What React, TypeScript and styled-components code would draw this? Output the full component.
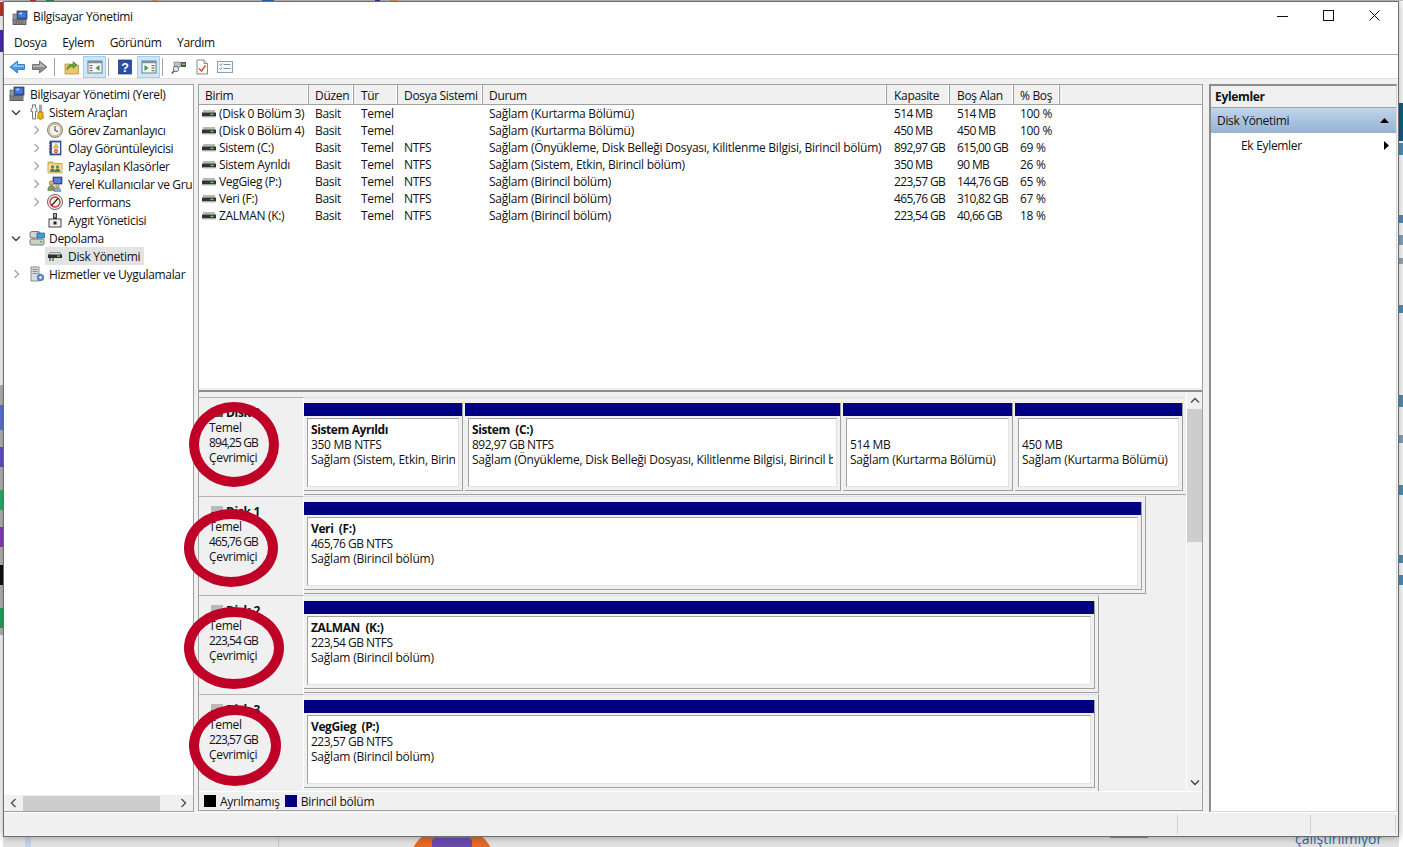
import React from "react";
import styled, { createGlobalStyle } from "styled-components";

const Global = createGlobalStyle`
  html, body { margin: 0; padding: 0; background: #e4e4e4; overflow: hidden; }
  * { box-sizing: border-box; }
  body { font-family: "Open Sans", "Noto Sans", "Liberation Sans", sans-serif; font-size: 12px; letter-spacing: -0.32px; color: #111; }
`;

const Desktop = styled.div`
  position: relative; width: 1403px; height: 847px; overflow: hidden;
  background: linear-gradient(180deg, #dcdcdc, #e2e2e2);
  padding: 1px 0 0 3px;
`;
const Scrap = styled.div<{ $x: number; $y: number; $w: number; $h: number; $c: string; $r?: number }>`
  position: absolute; left: ${p => p.$x}px; top: ${p => p.$y}px; width: ${p => p.$w}px; height: ${p => p.$h}px;
  background: ${p => p.$c}; border-radius: ${p => p.$r ?? 0}px;
`;
const ScrapText = styled.div`
  position: absolute; left: 1295px; top: 829px; font-size: 14px; color: #1c6ea4; letter-spacing: 0;
`;
const Window = styled.div`
  position: relative; width: 1396px; height: 836px; background: #f0f0f0; display: flex; flex-direction: column;
  border: 1px solid #6e6e6e; box-shadow: 0 0 8px rgba(0,0,0,.35);
`;
const TitleBar = styled.div`
  height: 31px; background: #fff; display: flex; align-items: center; padding-left: 8px; flex: none;
`;
const TitleText = styled.div`margin-left: 5px; flex: 1; margin-top: -3px;`;
const WinButton = styled.div`
  width: 46px; height: 29px; display: flex; align-items: center; justify-content: center; margin-top: -3px;
`;
const MenuBar = styled.div`
  height: 22px; background: #fff; border-bottom: 1px solid #a8a8a8; display: flex; gap: 15.5px; padding: 0 0 2px 10px; align-items: center; flex: none;
`;
const Toolbar = styled.div`
  height: 24px; background: #fff; border-bottom: 1px solid #e2e2e2; display: flex; align-items: center; padding: 1px 0 0 1px; flex: none;
`;
const ToolButton = styled.div<{ $on?: boolean; $ml?: number }>`
  width: 23px; height: 22px; display: flex; align-items: center; justify-content: center; margin-left: ${p => p.$ml ?? 0}px;
  background: ${p => (p.$on ? "#cce8ff" : "transparent")}; border: 1px solid ${p => (p.$on ? "#99d1ff" : "transparent")};
`;
const ToolDivider = styled.div<{ $ml: number; $mr: number }>`
  width: 1px; height: 18px; background: #a0a0a0; margin: 0 ${p => p.$mr}px 0 ${p => p.$ml}px;
`;
const Main = styled.div`
  flex: 1; display: flex; padding-top: 5px; min-height: 0;
`;
const TreePane = styled.div`
  width: 190px; background: #fff; border: 1px solid #a0a0a0; border-left: 0; display: flex; flex-direction: column; flex: none; overflow: hidden;
`;
const TreeList = styled.div`flex: 1; overflow: hidden;`;
const TreeRow = styled.div<{ $pad: number }>`
  height: 18px; display: flex; align-items: center; padding-left: ${p => p.$pad}px; white-space: nowrap;
`;
const Chevron = styled.div`width: 12px; height: 18px; flex: none; display: flex; align-items: center; justify-content: center;`;
const TreeItem = styled.div<{ $sel?: boolean; $ml: number; $gap: number }>`
  display: flex; align-items: center; height: 18px; padding: 0 4px 0 2px; margin-left: ${p => p.$ml}px; gap: ${p => p.$gap}px;
  background: ${p => (p.$sel ? "#e3e3e3" : "transparent")};
`;
const HScroll = styled.div`
  height: 16px; background: #f0f0f0; display: flex; align-items: center; flex: none; margin-bottom: 0;
`;
const HButton = styled.div`width: 19px; display: flex; justify-content: center; flex: none;`;
const HThumb = styled.div`width: 137px; height: 15px; background: #cdcdcd; flex: none;`;
const HTrack = styled.div`flex: 1;`;

const CenterPane = styled.div`
  width: 1005px; margin: 0 6px 1px 4px; display: flex; flex-direction: column; flex: none;
  border-left: 1px solid #a0a0a0; border-right: 1px solid #a0a0a0;
`;
const ListPane = styled.div`
  height: 304px; background: #fff; border-top: 1px solid #a0a0a0; flex: none; overflow: hidden;
`;
const columns = "110px 45px 44px 85px 404px 63px 64px 46px 1fr";
const HeaderRow = styled.div`
  display: grid; grid-template-columns: ${columns}; height: 20px; background: #f0f0f0; border-bottom: 1px solid #a0a0a0;
`;
const HeaderCell = styled.div<{ $pad?: number }>`
  padding: 2px 0 0 ${p => p.$pad ?? 6}px; border-right: 1px solid #a0a0a0; white-space: nowrap; overflow: hidden; box-shadow: inset -1px 0 0 #fff;
`;
const HeaderRest = styled.div``;
const DataRow = styled.div`
  display: grid; grid-template-columns: ${columns}; height: 17px; align-items: center;
`;
const Cell = styled.div<{ $pad: number; $ls: number }>`
  padding-left: ${p => p.$pad}px; letter-spacing: ${p => p.$ls}px; white-space: nowrap; overflow: hidden;
`;
const NameCell = styled.div`
  display: flex; align-items: center; gap: 3px; padding-left: 3px; white-space: nowrap; overflow: hidden;
`;
const Splitter = styled.div`height: 4px; flex: none; background: #f0f0f0; border-bottom: 2px solid #8c8c8c;`;
const LowerBody = styled.div`flex: 1; display: flex; min-height: 0; background: #f0f0f0;`;
const Rows = styled.div`
  width: 988px; padding-top: 5px; overflow: hidden; flex: none; border-right: 1px solid #fff;
`;
const DiskRow = styled.div`display: flex; height: 99px; align-items: flex-start;`;
const DiskLabel = styled.div`
  width: 105px; height: 99px; flex: none; border-top: 1px solid #b4b4b4; border-right: 1px solid #fff; padding: 7px 0 0 10px; line-height: 15px;
`;
const DiskName = styled.div`
  display: flex; align-items: center; gap: 3px; padding-left: 2px; font-weight: 700; height: 14.5px;
`;
const DiskSize = styled.div`letter-spacing: -0.9px;`;
const Track = styled.div`
  display: flex; gap: 2px; height: 98px; padding: 5px 3px 3px 0; border-top: 1px solid #dedede; border-right: 1px solid #a0a0a0; border-bottom: 1px solid #a0a0a0;
`;
const Partition = styled.div<{ $w: number }>`
  width: ${p => p.$w}px; height: 88px; display: flex; flex-direction: column; border-right: 1px solid #a0a0a0; border-bottom: 1px solid #a0a0a0; flex: none;
`;
const PartHead = styled.div`height: 13px; background: #000080; flex: none;`;
const PartBody = styled.div`
  flex: 1; margin: 2px 3px 3px 3px; background: #fff; border-top: 1px solid #a0a0a0; border-left: 1px solid #a0a0a0; border-right: 1px solid #e2e2e2; border-bottom: 1px solid #e2e2e2;
  padding: 3px 3px 0 3px; line-height: 15px; overflow: hidden; white-space: nowrap; min-width: 0;
`;
const PartTitle = styled.div`font-weight: 700; height: 15px; white-space: pre; letter-spacing: -0.4px;`;
const PartLine = styled.div<{ $ls: number }>`height: 15px; overflow: hidden; letter-spacing: ${p => p.$ls}px;`;
const VScroll = styled.div`width: 15px; flex: none; display: flex; flex-direction: column; background: #f0f0f0;`;
const VButton = styled.div`height: 17px; display: flex; align-items: center; justify-content: center; flex: none;`;
const VThumb = styled.div`height: 133px; background: #cdcdcd; flex: none;`;
const VTrack = styled.div`flex: 1;`;
const Legend = styled.div`
  height: 20px; flex: none; background: #f0f0f0; border-top: 1px solid #fff; border-bottom: 1px solid #a0a0a0; display: flex; align-items: center; padding-left: 5px;
`;
const Swatch = styled.div<{ $c: string }>`width: 12px; height: 12px; background: ${p => p.$c}; margin-right: 4px; flex: none;`;
const LegendText = styled.div`margin-right: 5px; letter-spacing: -0.25px;`;

const ActionsPane = styled.div`
  width: 188px; background: #fff; flex: none; border-top: 2px solid #8c8c8c; border-left: 2px solid #8c8c8c; border-right: 1px solid #d8d8d8; border-bottom: 1px solid #d8d8d8;
  display: flex; flex-direction: column;
`;
const ActionsHead = styled.div`
  height: 22px; background: #f0f0f0; border-bottom: 1px solid #a0a0a0; font-weight: 700; display: flex; align-items: center; padding-left: 4px; flex: none;
`;
const ActionsSection = styled.div`
  height: 25px; background: linear-gradient(180deg, #bfd5ec, #95b2d2); display: flex; align-items: center; justify-content: space-between; padding: 0 7px 0 6px; flex: none;
`;
const ActionsItem = styled.div`
  height: 24px; display: flex; align-items: center; justify-content: space-between; padding: 0 7px 0 30px; flex: none;
`;

const StatusBar = styled.div`height: 24px; display: flex; flex: none; background: #f0f0f0; border-top: 1px solid #fff;`;
const StatusCell = styled.div<{ $w: number }>`
  width: ${p => p.$w}px; flex: none; margin: 2px 0; border-right: 1px solid #d0d0d0;
`;
const Ring = styled.div<{ $x: number; $y: number; $w: number; $h: number }>`
  position: absolute; left: ${p => p.$x}px; top: ${p => p.$y}px; width: ${p => p.$w}px; height: ${p => p.$h}px;
  border: 10px solid #bf0027; border-radius: 50%; pointer-events: none;
`;

const S = ({ s = 16, children }: { s?: number; children: React.ReactNode }) => (
  <svg width={s} height={s} viewBox="0 0 16 16" style={{ flex: "none", display: "block" }}>{children}</svg>
);

const Ic = {
  computer: <S>
    <rect x="5" y="1" width="10" height="8" fill="#2a55b8" stroke="#444" strokeWidth=".8" />
    <rect x="6.3" y="2.2" width="7.4" height="5.4" fill="#3f7be0" />
    <path d="M6 3.5 10 2v3z" fill="#a9c9f5" />
    <rect x="1" y="9.5" width="13" height="5" fill="#9a9a9a" stroke="#444" strokeWidth=".8" />
    <path d="M2.5 11h10M2.5 13h10" stroke="#333" strokeWidth=".9" strokeDasharray="1 .6" />
    <rect x="1" y="4" width="4" height="6" fill="#8d97a3" stroke="#555" strokeWidth=".6" />
  </S>,
  tools: <S>
    <path d="M3.500 .8v3L2 5v2.500h1.500v7.500h3V7.500H8V5L6.500 3.800v-3z" fill="#f3f3f3" stroke="#5a5a5a" strokeWidth=".8" />
    <rect x="10.500" y="1" width="2" height="7" fill="#a8a8a8" stroke="#666" strokeWidth=".4" />
    <path d="M9.200 8h4.600l.6 6.200-2.900 1.300-2.900-1.300z" fill="#e8b416" stroke="#8f6a05" strokeWidth=".7" />
  </S>,
  clock: <S>
    <circle cx="8" cy="8" r="7.500" fill="#d9c9a4" stroke="#777" strokeWidth=".9" />
    <circle cx="8" cy="8" r="5.600" fill="#f4f2ea" stroke="#a8a8a8" strokeWidth=".6" />
    <path d="M8 4v4.300l3 1.400" fill="none" stroke="#555" strokeWidth="1.100" />
  </S>,
  event: <S>
    <rect x="3" y="1" width="11" height="14" fill="#3f5fa3" stroke="#2b3f6b" strokeWidth=".7" />
    <rect x="5" y="2.500" width="8" height="11" fill="#eef1f6" />
    <path d="M9 3.500 11.500 8h-5z" fill="#f2c21a" stroke="#a88408" strokeWidth=".4" />
    <circle cx="9" cy="11" r="2" fill="#d33" />
    <path d="M7.800 11h2.400" stroke="#fff" strokeWidth=".9" />
    <path d="M2 3h2M2 6h2M2 9h2M2 12h2" stroke="#333" strokeWidth=".9" />
  </S>,
  shared: <S>
    <path d="M1 4h5l1 1.500h8V15H1z" fill="#eecb73" stroke="#a9893e" strokeWidth=".7" />
    <rect x="1.500" y="6.500" width="13" height="8" fill="#f6dc96" />
    <circle cx="5.500" cy="9" r="1.700" fill="#5c8a4a" /><path d="M2.800 14c0-2.500 1.200-3.300 2.700-3.300S8.200 11.500 8.200 14z" fill="#4d7c9c" />
    <circle cx="10.500" cy="9" r="1.700" fill="#6a8f56" /><path d="M7.800 14c0-2.500 1.200-3.300 2.700-3.300s2.700.8 2.700 3.300z" fill="#5a7d3f" />
  </S>,
  users: <S>
    <rect x="6" y="1" width="9" height="7" fill="#2a55b8" stroke="#444" strokeWidth=".7" />
    <rect x="7.200" y="2" width="6.600" height="5" fill="#4a86e6" />
    <circle cx="4.500" cy="7" r="2.300" fill="#d9a777" stroke="#7a5a3a" strokeWidth=".5" />
    <path d="M.8 14.500c0-3.500 1.500-5 3.700-5s3.700 1.500 3.700 5z" fill="#7d9b58" stroke="#4e6437" strokeWidth=".5" />
    <circle cx="10.500" cy="10" r="2" fill="#d9b08c" stroke="#7a5a3a" strokeWidth=".5" />
    <path d="M7 15.500c0-2.700 1.500-3.700 3.500-3.700s3.500 1 3.500 3.700z" fill="#8ba9c9" stroke="#566f8c" strokeWidth=".5" />
  </S>,
  perf: <S>
    <circle cx="8" cy="8" r="7.500" fill="#f6f1ea" stroke="#555" strokeWidth=".9" />
    <circle cx="8" cy="8" r="5" fill="none" stroke="#c9352c" strokeWidth="1.300" />
    <path d="M4.500 11.500 11 4.500" stroke="#222" strokeWidth="1.200" />
  </S>,
  device: <S>
    <rect x="6" y="1" width="4" height="6" fill="#444" />
    <rect x="7" y="2" width="2" height="3" fill="#aaa" />
    <rect x="2" y="7" width="12" height="8" fill="#eee" stroke="#333" strokeWidth=".9" />
    <rect x="6.500" y="9.500" width="3" height="3" fill="#222" />
  </S>,
  storage: <S>
    <rect x="1" y="1.500" width="10" height="6.500" rx="2" fill="#d3d3d3" stroke="#5d5d5d" strokeWidth=".8" />
    <rect x="8" y="3" width="7.500" height="5" fill="#3b9fd8" stroke="#23608a" strokeWidth=".7" />
    <rect x="1" y="9" width="14" height="6" rx="1.500" fill="#c9d2c4" stroke="#5d5d5d" strokeWidth=".8" />
    <rect x="11" y="11" width="2" height="1.400" fill="#4caf50" />
  </S>,
  drive: <S>
    <path d="M3 4.500h10l2 4H1z" fill="#d8d8d8" stroke="#666" strokeWidth=".6" />
    <rect x="1" y="6.500" width="14" height="3.500" fill="#2e2e2e" />
    <rect x="10" y="7.500" width="3" height="1.300" fill="#5fdc4e" />
    <path d="M3 10v3M6 10v3" stroke="#444" strokeWidth="1.200" />
  </S>,
  services: <S>
    <rect x="2" y="1" width="8" height="14" fill="#d8dde2" stroke="#6f7a85" strokeWidth=".8" />
    <path d="M3.500 3.500h5M3.500 5.500h5M3.500 7.500h5" stroke="#7a8590" strokeWidth=".9" />
    <circle cx="11.500" cy="11.500" r="3.200" fill="#5e97cf" stroke="#35648f" strokeWidth=".8" />
    <circle cx="11.500" cy="11.500" r="1.200" fill="#fff" />
  </S>,
  listDrive: <svg width="14" height="8" viewBox="0 0 14 8" style={{ flex: "none", display: "block" }}>
    <rect x="1" y="0" width="12" height="2.500" fill="#b8b8b8" />
    <rect x="0" y="2.500" width="14" height="4" fill="#333" />
    <rect x="8.500" y="3.700" width="3" height="1.400" fill="#5fdc4e" />
    <rect x="1" y="6.500" width="12" height="1" fill="#bbb" />
  </svg>,
  back: <S>
    <path d="M8.500 2v3.500H15.500v5H8.500V14L1 8z" fill="#3d9be8" stroke="#1f6fb5" strokeWidth=".8" />
    <path d="M8 3.500v3h7v1.500H3z" fill="#8fcbf5" />
  </S>,
  forward: <S>
    <path d="M7.500 2v3.500H.5v5h7V14L15 8z" fill="#8c8c8c" stroke="#626262" strokeWidth=".8" />
    <path d="M8 3.500v3H1v1.500h12z" fill="#b8b8b8" />
  </S>,
  up: <S>
    <path d="M1 5h5l1 1.500h7.500V15H1z" fill="#ecc86b" stroke="#a8873a" strokeWidth=".7" />
    <path d="M3 11c0-4 3-6 6-6V2.500L13.500 6 9 9.500V7.500c-2 0-4.500 1-6 3.500z" fill="#5aa83c" stroke="#3d7a25" strokeWidth=".5" />
  </S>,
  treeToggle: <S>
    <rect x="1" y="2" width="14" height="12" fill="#f6f6f6" stroke="#6d6d6d" strokeWidth=".9" />
    <rect x="1" y="2" width="14" height="2.200" fill="#7d8f99" />
    <path d="M2.500 6h3v1.200h-3zM2.500 8.500h3v1.200h-3zM2.500 11h3v1.200h-3z" fill="#777" />
    <path d="M12.500 6v6L8.500 9z" fill="#2f9e44" />
  </S>,
  help: <S>
    <rect x="1.500" y="1" width="13" height="14" fill="#2b4fa6" stroke="#1c3272" strokeWidth=".7" />
    <text x="8" y="13" fontSize="12.500" fontFamily="Liberation Sans" fontWeight="700" textAnchor="middle" fill="#fff">?</text>
  </S>,
  paneToggle: <S>
    <rect x="1" y="2" width="14" height="12" fill="#f6f6f6" stroke="#6d6d6d" strokeWidth=".9" />
    <rect x="1" y="2" width="14" height="2.200" fill="#7d8f99" />
    <path d="M10.500 6h3v1.200h-3zM10.500 8.500h3v1.200h-3zM10.500 11h3v1.200h-3z" fill="#777" />
    <path d="M3.500 6v6l4-3z" fill="#2f9e44" />
  </S>,
  rescan: <S>
    <rect x="5" y="3" width="10" height="5" fill="#555" />
    <rect x="3" y="3" width="7" height="5" fill="#bdbdbd" stroke="#666" strokeWidth=".5" />
    <rect x="11" y="4.500" width="3" height="1.500" fill="#5fdc4e" />
    <circle cx="5" cy="10" r="2.700" fill="#dfe8ef" stroke="#666" strokeWidth=".9" />
    <path d="M3 12 .8 14.600" stroke="#555" strokeWidth="1.500" />
  </S>,
  checkDoc: <S>
    <path d="M3 1h7l3.500 3.500V15H3z" fill="#fff" stroke="#7a7a7a" strokeWidth=".9" />
    <path d="M10 1v3.500h3.500" fill="#e8e8e8" stroke="#7a7a7a" strokeWidth=".8" />
    <path d="M5 9.500 7.500 12 11.500 6.500" fill="none" stroke="#d9542b" strokeWidth="1.500" />
  </S>,
  checkList: <S>
    <rect x=".5" y="2.500" width="15" height="11" fill="#f7fafc" stroke="#8096a8" strokeWidth=".9" />
    <path d="M2.500 5.500 3.500 6.500 5 4.500M2.500 9.500 3.500 10.500 5 8.500" fill="none" stroke="#3a7bb8" strokeWidth=".9" />
    <path d="M6.500 5.500h7M6.500 9.500h7" stroke="#6f8496" strokeWidth=".9" />
  </S>,
};

const ChevR = ({ c = "#a6a6a6" }: { c?: string }) => (
  <svg width="7" height="10" viewBox="0 0 7 10"><path d="M1.500 1 5.500 5l-4 4" fill="none" stroke={c} strokeWidth="1.400" /></svg>
);
const ChevL = () => (
  <svg width="7" height="10" viewBox="0 0 7 10"><path d="M5.500 1 1.500 5l4 4" fill="none" stroke="#505050" strokeWidth="1.400" /></svg>
);
const ChevD = () => (
  <svg width="10" height="7" viewBox="0 0 10 7"><path d="M1 1.500 5 5.500l4-4" fill="none" stroke="#404040" strokeWidth="1.400" /></svg>
);

type Tree = { label: string; icon: keyof typeof Ic; depth: 0 | 1 | 2; exp?: "r" | "d"; sel?: boolean };
const tree: Tree[] = [
  { label: "Bilgisayar Yönetimi (Yerel)", icon: "computer", depth: 0 },
  { label: "Sistem Araçları", icon: "tools", depth: 1, exp: "d" },
  { label: "Görev Zamanlayıcı", icon: "clock", depth: 2, exp: "r" },
  { label: "Olay Görüntüleyicisi", icon: "event", depth: 2, exp: "r" },
  { label: "Paylaşılan Klasörler", icon: "shared", depth: 2, exp: "r" },
  { label: "Yerel Kullanıcılar ve Gruplar", icon: "users", depth: 2, exp: "r" },
  { label: "Performans", icon: "perf", depth: 2, exp: "r" },
  { label: "Aygıt Yöneticisi", icon: "device", depth: 2 },
  { label: "Depolama", icon: "storage", depth: 1, exp: "d" },
  { label: "Disk Yönetimi", icon: "drive", depth: 2, sel: true },
  { label: "Hizmetler ve Uygulamalar", icon: "services", depth: 1, exp: "r" },
];
const rowPad = { 0: 3, 1: 6, 2: 26 };
const itemMl = { 0: 0, 1: 5, 2: 3 };
const itemGap = { 0: 5, 1: 4, 2: 5 };

const heads: [string, number?][] = [["Birim"], ["Düzen"], ["Tür", 7], ["Dosya Sistemi"], ["Durum"], ["Kapasite", 7], ["Boş Alan", 7], ["% Boş"]];
const volumes = [
  ["(Disk 0 Bölüm 3)", "Basit", "Temel", "", "Sağlam (Kurtarma Bölümü)", "514 MB", "514 MB", "100 %"],
  ["(Disk 0 Bölüm 4)", "Basit", "Temel", "", "Sağlam (Kurtarma Bölümü)", "450 MB", "450 MB", "100 %"],
  ["Sistem (C:)", "Basit", "Temel", "NTFS", "Sağlam (Önyükleme, Disk Belleği Dosyası, Kilitlenme Bilgisi, Birincil bölüm)", "892,97 GB", "615,00 GB", "69 %"],
  ["Sistem Ayrıldı", "Basit", "Temel", "NTFS", "Sağlam (Sistem, Etkin, Birincil bölüm)", "350 MB", "90 MB", "26 %"],
  ["VegGieg (P:)", "Basit", "Temel", "NTFS", "Sağlam (Birincil bölüm)", "223,57 GB", "144,76 GB", "65 %"],
  ["Veri (F:)", "Basit", "Temel", "NTFS", "Sağlam (Birincil bölüm)", "465,76 GB", "310,82 GB", "67 %"],
  ["ZALMAN (K:)", "Basit", "Temel", "NTFS", "Sağlam (Birincil bölüm)", "223,54 GB", "40,66 GB", "18 %"],
];
const cellPad = [6, 7, 6, 6, 7, 7, 6];
const cellLs = [-0.32, -0.32, -0.32, -0.25, -0.65, -0.65, -0.32];

type Part = { w: number; title?: string; size: string; status: string };
const disks: { name: string; size: string; parts: Part[] }[] = [
  { name: "Disk 0", size: "894,25 GB", parts: [
    { w: 159, title: "Sistem Ayrıldı", size: "350 MB NTFS", status: "Sağlam (Sistem, Etkin, Birincil bölüm)" },
    { w: 376, title: "Sistem  (C:)", size: "892,97 GB NTFS", status: "Sağlam (Önyükleme, Disk Belleği Dosyası, Kilitlenme Bilgisi, Birincil bölüm)" },
    { w: 170, size: "514 MB", status: "Sağlam (Kurtarma Bölümü)" },
    { w: 168, size: "450 MB", status: "Sağlam (Kurtarma Bölümü)" },
  ] },
  { name: "Disk 1", size: "465,76 GB", parts: [{ w: 838, title: "Veri  (F:)", size: "465,76 GB NTFS", status: "Sağlam (Birincil bölüm)" }] },
  { name: "Disk 2", size: "223,54 GB", parts: [{ w: 791, title: "ZALMAN  (K:)", size: "223,54 GB NTFS", status: "Sağlam (Birincil bölüm)" }] },
  { name: "Disk 3", size: "223,57 GB", parts: [{ w: 791, title: "VegGieg  (P:)", size: "223,57 GB NTFS", status: "Sağlam (Birincil bölüm)" }] },
];

const scraps: [number, number, number, number, string, number?][] = [
  [0, 0, 3, 847, "#fff"], [1399, 0, 4, 847, "#fff"],
  [0, 0, 1403, 1, "#c9c9c9"],
  [0, 2, 4, 14, "#c0392b"], [30, 0, 6, 1, "#c0392b"], [46, 0, 8, 1, "#2a9d4a"], [152, 0, 6, 1, "#e0a060"],
  [262, 0, 12, 1, "#2a6fd0"], [375, 0, 5, 1, "#4a1fb8"], [390, 0, 8, 1, "#e0a060"],
  [0, 30, 3, 22, "#4a2fb0"],
  [0, 385, 3, 250, "#b8b8b8"],
  [0, 405, 3, 25, "#5b7bd0"], [0, 447, 3, 20, "#6a4fd0"], [0, 490, 3, 20, "#2db36a"],
  [0, 527, 3, 20, "#8a3fb8"], [0, 565, 3, 20, "#111"], [0, 608, 3, 20, "#22a85a"],
  [1399, 103, 4, 38, "#0f5f86"], [1399, 143, 4, 12, "#4a93c0"], [1399, 215, 4, 8, "#4a93c0"], [1399, 235, 4, 10, "#7fa8c4"],
  [1399, 258, 4, 6, "#9ab"], [1399, 305, 4, 8, "#4a93c0"], [1399, 395, 4, 12, "#4a93c0"], [1399, 435, 4, 8, "#7fa8c4"],
  [1399, 485, 4, 10, "#4a93c0"], [1399, 555, 4, 8, "#4a93c0"], [1399, 575, 4, 10, "#4a93c0"],
  [407, 825, 90, 90, "#e56a24", 45], [432, 838, 40, 14, "#6a4bb0", 4], [25, 837, 6, 10, "#c4d4e4"], [278, 837, 1, 10, "#c8c8c8"],
  [1110, 835, 38, 3, "#c9801e"],
];

const rings: [number, number, number, number][] = [
  [189, 402, 90, 85], [184, 509, 94, 78], [184, 607, 100, 82], [189, 705, 92, 81],
];

export default function App() {
  return (
    <Desktop>
      <Global />
      {scraps.map(([x, y, w, h, c, r], i) => <Scrap key={i} $x={x} $y={y} $w={w} $h={h} $c={c} $r={r} />)}
      <ScrapText>çalıştırılmıyor</ScrapText>
      <Window>
        <TitleBar>
          {Ic.computer}
          <TitleText>Bilgisayar Yönetimi</TitleText>
          <WinButton><svg width="12" height="12" viewBox="0 0 12 12"><path d="M0 6.500h11" stroke="#111" /></svg></WinButton>
          <WinButton><svg width="12" height="12" viewBox="0 0 12 12"><rect x=".5" y=".5" width="10" height="10" fill="none" stroke="#111" /></svg></WinButton>
          <WinButton><svg width="12" height="12" viewBox="0 0 12 12"><path d="M.5.5l10 10M10.500.5l-10 10" stroke="#111" /></svg></WinButton>
        </TitleBar>
        <MenuBar>
          <div>Dosya</div><div>Eylem</div><div>Görünüm</div><div>Yardım</div>
        </MenuBar>
        <Toolbar>
          <ToolButton>{Ic.back}</ToolButton>
          <ToolButton>{Ic.forward}</ToolButton>
          <ToolDivider $ml={3} $mr={5} />
          <ToolButton>{Ic.up}</ToolButton>
          <ToolButton $on>{Ic.treeToggle}</ToolButton>
          <ToolDivider $ml={2} $mr={4} />
          <ToolButton>{Ic.help}</ToolButton>
          <ToolButton $on $ml={1}>{Ic.paneToggle}</ToolButton>
          <ToolDivider $ml={2} $mr={4} />
          <ToolButton>{Ic.rescan}</ToolButton>
          <ToolButton>{Ic.checkDoc}</ToolButton>
          <ToolButton>{Ic.checkList}</ToolButton>
        </Toolbar>
        <Main>
          <TreePane>
            <TreeList>
              {tree.map(t => (
                <TreeRow key={t.label} $pad={rowPad[t.depth]}>
                  {t.depth > 0 && <Chevron>{t.exp === "d" ? <ChevD /> : t.exp === "r" ? <ChevR /> : null}</Chevron>}
                  <TreeItem $sel={t.sel} $ml={itemMl[t.depth]} $gap={itemGap[t.depth]}>
                    {Ic[t.icon]}<span>{t.label}</span>
                  </TreeItem>
                </TreeRow>
              ))}
            </TreeList>
            <HScroll>
              <HButton><ChevL /></HButton>
              <HThumb />
              <HTrack />
              <HButton><ChevR c="#505050" /></HButton>
            </HScroll>
          </TreePane>
          <CenterPane>
            <ListPane>
              <HeaderRow>
                {heads.map(([h, p]) => <HeaderCell key={h} $pad={p}>{h}</HeaderCell>)}
                <HeaderRest />
              </HeaderRow>
              {volumes.map(v => (
                <DataRow key={v[0]}>
                  <NameCell>{Ic.listDrive}<span>{v[0]}</span></NameCell>
                  {v.slice(1).map((c, i) => <Cell key={i} $pad={cellPad[i]} $ls={cellLs[i]}>{c}</Cell>)}
                </DataRow>
              ))}
            </ListPane>
            <Splitter />
            <LowerBody>
              <Rows>
                {disks.map(d => (
                  <DiskRow key={d.name}>
                    <DiskLabel>
                      <DiskName>
                        <svg width="12" height="11" viewBox="0 0 12 11" style={{ flex: "none" }}><rect width="12" height="6" fill="#b9b9b9" /><rect y="6" width="12" height="4" fill="#555" /></svg>
                        {d.name}
                      </DiskName>
                      <div>Temel</div>
                      <DiskSize>{d.size}</DiskSize>
                      <div>Çevrimiçi</div>
                    </DiskLabel>
                    <Track>
                      {d.parts.map((p, i) => (
                        <Partition key={i} $w={p.w}>
                          <PartHead />
                          <PartBody>
                            <PartTitle>{p.title ?? ""}</PartTitle>
                            <PartLine $ls={p.size.includes(",") ? -0.5 : -0.3}>{p.size}</PartLine>
                            <PartLine $ls={-0.22}>{p.status}</PartLine>
                          </PartBody>
                        </Partition>
                      ))}
                    </Track>
                  </DiskRow>
                ))}
              </Rows>
              <VScroll>
                <VButton><svg width="10" height="7" viewBox="0 0 10 7"><path d="M1 5.500 5 1.500l4 4" fill="none" stroke="#505050" strokeWidth="1.500" /></svg></VButton>
                <VThumb />
                <VTrack />
                <VButton><ChevD /></VButton>
              </VScroll>
            </LowerBody>
            <Legend>
              <Swatch $c="#000" /><LegendText>Ayrılmamış</LegendText>
              <Swatch $c="#000080" /><LegendText>Birincil bölüm</LegendText>
            </Legend>
          </CenterPane>
          <ActionsPane>
            <ActionsHead>Eylemler</ActionsHead>
            <ActionsSection>
              <span>Disk Yönetimi</span>
              <svg width="9" height="5" viewBox="0 0 9 5"><path d="M0 5 4.500 0 9 5z" fill="#000" /></svg>
            </ActionsSection>
            <ActionsItem>
              <span>Ek Eylemler</span>
              <svg width="5" height="9" viewBox="0 0 5 9"><path d="M0 0 5 4.500 0 9z" fill="#000" /></svg>
            </ActionsItem>
          </ActionsPane>
        </Main>
        <StatusBar>
          <StatusCell $w={1174} />
          <StatusCell $w={133} />
          <StatusCell $w={85} />
        </StatusBar>
      </Window>
      {rings.map(([x, y, w, h]) => <Ring key={x + "-" + y} $x={x} $y={y} $w={w} $h={h} />)}
    </Desktop>
  );
}
